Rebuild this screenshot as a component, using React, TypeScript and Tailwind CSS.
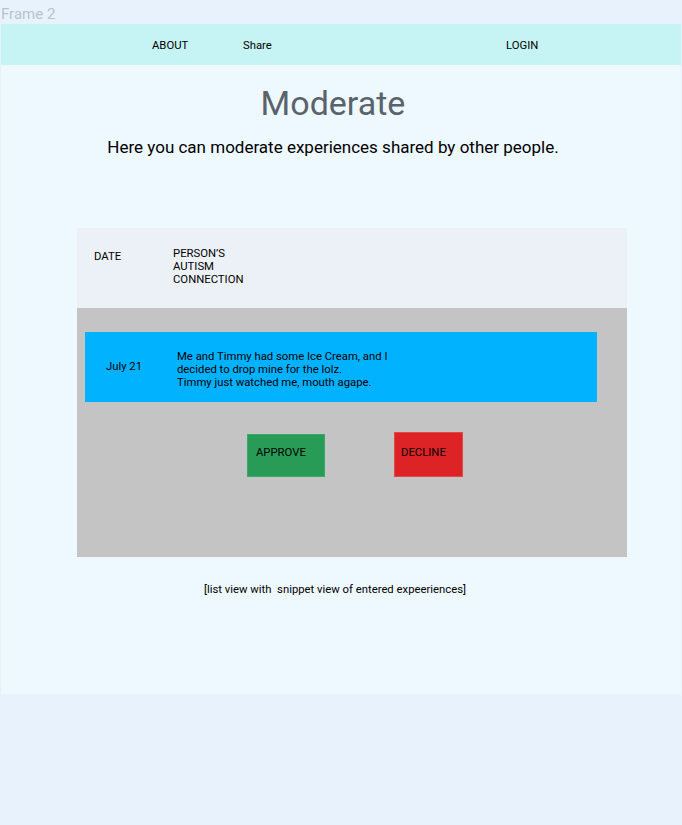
export default function App() {
  return (
    <div className="min-h-[825px] w-[682px] bg-[#e8f2fc] font-['Roboto',sans-serif]">
      <div className="h-[24px] pl-[1px] pt-[5px] text-[15px] leading-[18px] text-[#b8c2cc]">Frame 2</div>
      <div className="ml-[1px] h-[670px] w-[680px] bg-[#eef8ff]">
        <nav className="flex h-[41px] items-center bg-[#c6f3f3] pt-[2px] text-[11.3px] leading-[13px] text-black">
          <span className="ml-[151px] w-[91px]">ABOUT</span>
          <span className="w-[263px]">Share</span>
          <span>LOGIN</span>
        </nav>
        <div className="pr-[16px] text-center">
          <h1 className="mt-[18px] text-[34px] leading-[40px] text-[#5a636b]">Moderate</h1>
          <p className="mt-[14px] text-[17px] leading-[20px] text-black">
            Here you can moderate experiences shared by other people.
          </p>
        </div>
        <div className="ml-[76px] mt-[71px] w-[550px]">
          <div className="flex h-[80px] items-start bg-[#ebf1f6] text-[11.3px] leading-[13px] text-black">
            <span className="ml-[17px] mt-[22px] w-[79px]">DATE</span>
            <span className="mt-[19px]">
              PERSON’S
              <br />
              AUTISM
              <br />
              CONNECTION
            </span>
          </div>
          <div className="h-[249px] bg-[#c4c4c4] pt-[24px]">
            <div className="ml-[8px] flex h-[70px] w-[512px] items-center bg-[#00b2ff] text-[11.3px] leading-[13px] text-black">
              <span className="mb-[2px] ml-[21px] w-[71px]">July 21</span>
              <span className="mt-[4px]">
                Me and Timmy had some Ice Cream, and I
                <br />
                decided to drop mine for the lolz.
                <br />
                Timmy just watched me, mouth agape.
              </span>
            </div>
            <div className="mt-[30px] flex items-start text-[11.3px] leading-[13px] text-black">
              <div className="ml-[170px] mt-[2px] h-[43px] w-[78px] border border-[#3aa866] bg-[#289c56] pl-[8px] pt-[11px]">
                APPROVE
              </div>
              <div className="ml-[69px] h-[45px] w-[69px] border border-[#e0484a] bg-[#dd2326] pl-[6px] pt-[13px]">
                DECLINE
              </div>
            </div>
          </div>
        </div>
        <p className="mt-[26px] pr-[12px] text-center text-[11.3px] leading-[13px] text-black">
          [list view with&nbsp; snippet view of entered expeeriences]
        </p>
      </div>
    </div>
  );
}
